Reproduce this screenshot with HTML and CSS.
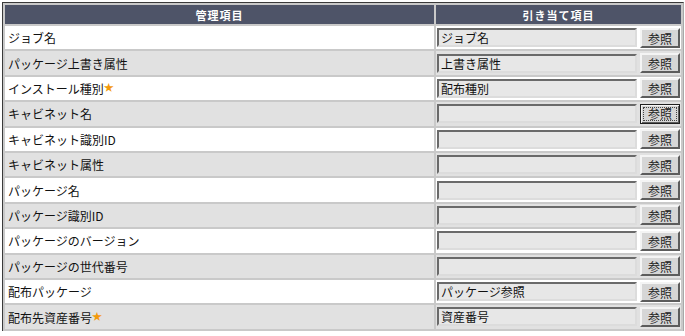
FILE: index.html
```html
<!DOCTYPE html>
<html lang="ja">
<head>
  <meta charset="UTF-8">
  <title>引き当て項目</title>
  <link rel="stylesheet" href="styles.css">
</head>
<body>
  <div class="frame">
    <table class="map-table">
      <thead>
        <tr>
          <th class="col-name">管理項目</th>
          <th class="col-value">引き当て項目</th>
        </tr>
      </thead>
      <tbody>
        <tr>
          <td>ジョブ名</td>
          <td><div class="pick"><input class="field" type="text" value="ジョブ名"><button class="ref">参照</button></div></td>
        </tr>
        <tr>
          <td>パッケージ上書き属性</td>
          <td><div class="pick"><input class="field" type="text" value="上書き属性"><button class="ref">参照</button></div></td>
        </tr>
        <tr>
          <td>インストール種別<span class="req">★</span></td>
          <td><div class="pick"><input class="field" type="text" value="配布種別"><button class="ref">参照</button></div></td>
        </tr>
        <tr>
          <td>キャビネット名</td>
          <td><div class="pick"><input class="field" type="text" value=""><button class="ref focused">参照</button></div></td>
        </tr>
        <tr>
          <td>キャビネット識別ID</td>
          <td><div class="pick"><input class="field" type="text" value=""><button class="ref">参照</button></div></td>
        </tr>
        <tr>
          <td>キャビネット属性</td>
          <td><div class="pick"><input class="field" type="text" value=""><button class="ref">参照</button></div></td>
        </tr>
        <tr>
          <td>パッケージ名</td>
          <td><div class="pick"><input class="field" type="text" value=""><button class="ref">参照</button></div></td>
        </tr>
        <tr>
          <td>パッケージ識別ID</td>
          <td><div class="pick"><input class="field" type="text" value=""><button class="ref">参照</button></div></td>
        </tr>
        <tr>
          <td>パッケージのバージョン</td>
          <td><div class="pick"><input class="field" type="text" value=""><button class="ref">参照</button></div></td>
        </tr>
        <tr>
          <td>パッケージの世代番号</td>
          <td><div class="pick"><input class="field" type="text" value=""><button class="ref">参照</button></div></td>
        </tr>
        <tr>
          <td>配布パッケージ</td>
          <td><div class="pick"><input class="field" type="text" value="パッケージ参照"><button class="ref">参照</button></div></td>
        </tr>
        <tr>
          <td>配布先資産番号<span class="req">★</span></td>
          <td><div class="pick"><input class="field" type="text" value="資産番号"><button class="ref">参照</button></div></td>
        </tr>
      </tbody>
    </table>
  </div>
</body>
</html>
```

FILE: styles.css
```css
body {
  margin: 0;
  background-color: #ffffff;
  font-family: "Noto Sans CJK JP", "DejaVu Sans", sans-serif;
  font-size: 12px;
  color: #111111;
}

.frame {
  margin: 2px 2px 0 2px;
  border-top: 1px solid #3a3a3a;
  border-left: 1px solid #3a3a3a;
  border-right: 1px solid #a8a8a8;
  width: 680px;
}

.map-table {
  width: 100%;
  border-collapse: separate;
  border-spacing: 2px;
  background-color: #c9c9c9;
}

.map-table th {
  height: 19px;
  padding: 0;
  background-color: #4e5468;
  color: #ffffff;
  font-size: 11px;
  font-weight: bold;
  letter-spacing: 1px;
  text-align: center;
}

.col-name {
  width: 429px;
}

.map-table td {
  height: 23.4px;
  padding: 0 3px;
  background-color: #ffffff;
  vertical-align: middle;
}

.map-table tbody tr:nth-child(even) td {
  background-color: #e1e1e1;
}

.map-table td:last-child {
  padding: 0 1px 0 1px;
}

.req {
  color: #f39a0b;
  font-size: 10px;
  vertical-align: 3px;
}

.pick {
  display: flex;
  align-items: center;
  gap: 3px;
}

.field {
  width: 200px;
  height: 19px;
  box-sizing: border-box;
  margin: 0;
  padding: 0 2px;
  border: 2px solid;
  border-color: #6a6a6a #dcdcdc #dcdcdc #6a6a6a;
  background-color: #e7e7e7;
  font-family: "Noto Sans CJK JP", "DejaVu Sans", sans-serif;
  font-size: 12px;
  color: #111111;
}

.ref {
  width: 40px;
  height: 20px;
  box-sizing: border-box;
  margin: 0;
  padding: 0;
  border: 2px solid;
  border-color: #f4f4f4 #5c5c5c #5c5c5c #f4f4f4;
  background-color: #d6d6d6;
  font-family: "Noto Sans CJK JP", "DejaVu Sans", sans-serif;
  font-size: 12px;
  color: #222222;
}

.ref.focused {
  border: 1px solid #202020;
  outline: 1px dotted #444444;
  outline-offset: -4px;
  box-shadow: inset 1px 1px 0 #f4f4f4, inset -1px -1px 0 #5c5c5c;
}
```
